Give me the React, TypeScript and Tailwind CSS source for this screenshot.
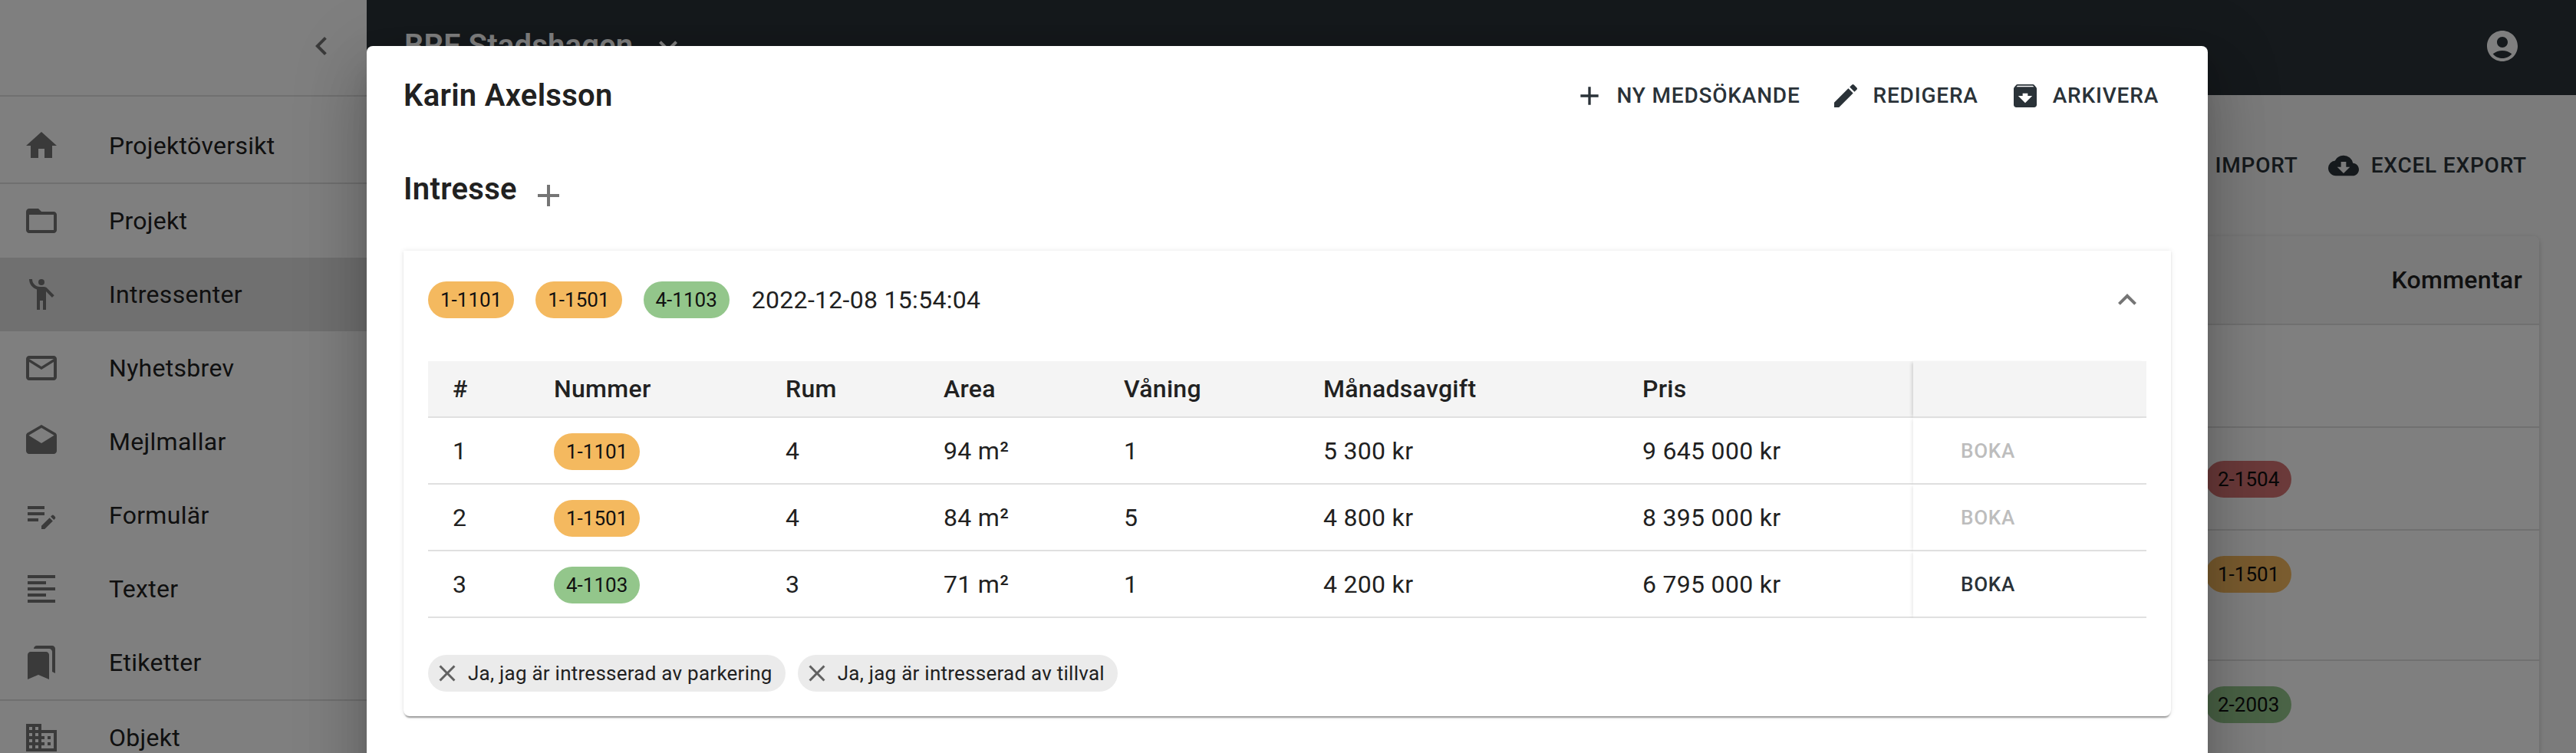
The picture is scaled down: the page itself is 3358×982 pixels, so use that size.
import React from "react";
import {
  MdHome, MdFolderOpen, MdEmojiPeople, MdMailOutline, MdDrafts, MdEditNote, MdFormatAlignLeft,
  MdBookmarks, MdDomain, MdChevronLeft, MdExpandMore, MdExpandLess, MdAccountCircle, MdCloudDownload,
  MdAdd, MdEdit, MdArchive, MdClose,
} from "react-icons/md";

const ORANGE = "bg-[#f4b95f]";
const GREEN = "bg-[#93c68b]";
const RED = "bg-[#d67474]";

function Chip({ label, color }: { label: string; color: string }) {
  return (
    <span className={`inline-flex h-12 items-center rounded-full px-4 align-middle text-[26px] leading-none tracking-normal text-[#111] ${color}`}>
      {label}
    </span>
  );
}

function TextButton({ icon, label }: { icon: React.ReactNode; label: string }) {
  return (
    <button className="flex h-[72px] items-center gap-4 pl-2 pr-4 text-[28px] font-medium tracking-[0.8px] text-[#2a3238]">
      {icon}
      <span>{label}</span>
    </button>
  );
}

const nav: { icon: React.ElementType; label: string; active?: boolean; divider?: boolean }[] = [
  { icon: MdHome, label: "Projektöversikt", divider: true },
  { icon: MdFolderOpen, label: "Projekt" },
  { icon: MdEmojiPeople, label: "Intressenter", active: true },
  { icon: MdMailOutline, label: "Nyhetsbrev" },
  { icon: MdDrafts, label: "Mejlmallar" },
  { icon: MdEditNote, label: "Formulär" },
  { icon: MdFormatAlignLeft, label: "Texter" },
  { icon: MdBookmarks, label: "Etiketter", divider: true },
  { icon: MdDomain, label: "Objekt" },
];

const rows = [
  { n: 1, chip: "1-1101", color: ORANGE, rum: 4, area: "94 m²", van: 1, avg: "5 300 kr", pris: "9 645 000 kr", can: false },
  { n: 2, chip: "1-1501", color: ORANGE, rum: 4, area: "84 m²", van: 5, avg: "4 800 kr", pris: "8 395 000 kr", can: false },
  { n: 3, chip: "4-1103", color: GREEN, rum: 3, area: "71 m²", van: 1, avg: "4 200 kr", pris: "6 795 000 kr", can: true },
];

const widths = [133, 301, 206, 235, 260, 416, 385, 304];
const heads = ["#", "Nummer", "Rum", "Area", "Våning", "Månadsavgift", "Pris"];

function Sidebar() {
  return (
    <aside className="flex h-full w-[478px] shrink-0 flex-col bg-white">
      <div className="flex h-[126px] shrink-0 items-start justify-end border-b-2 border-[#e0e0e0] pr-[35px] pt-9">
        <MdChevronLeft size={48} className="text-[#757575]" />
      </div>
      <nav className="pt-[16px]">
        {nav.map((n) => {
          const I = n.icon;
          return (
            <div
              key={n.label}
              className={`flex items-center gap-[64px] pl-[30px] ${n.divider ? "h-[98px] border-b-2 border-[#e0e0e0] pb-0" : "h-24"} ${n.active ? "bg-[#e0e0e0]" : ""}`}
            >
              <I size={48} className="shrink-0 text-[#757575]" />
              <span className="text-[32px] tracking-[0.3px] text-[#212121]">{n.label}</span>
            </div>
          );
        })}
      </nav>
    </aside>
  );
}

function Background() {
  return (
    <div className="flex min-w-0 flex-1 flex-col bg-[#f6f6f6]">
      <header className="flex h-[124px] shrink-0 items-center justify-between bg-[#2a3238] pb-1 pl-[49px] pr-[72px] text-white">
        <div className="flex items-center gap-[22px]">
          <span className="text-[40px] font-semibold tracking-[0.2px]">BRF Stadshagen</span>
          <MdExpandMore size={48} />
        </div>
        <MdAccountCircle size={48} />
      </header>
      <div className="flex h-[184px] shrink-0 items-start justify-end gap-[15px] pr-[48px] pt-[56px]">
        <TextButton icon={<MdCloudDownload size={40} className="rotate-180" />} label="IMPORT" />
        <TextButton icon={<MdCloudDownload size={40} />} label="EXCEL EXPORT" />
      </div>
      <section className="mx-[48px] flex-1 rounded-t-lg bg-white shadow-[0_2px_6px_rgba(0,0,0,0.2)]">
        <div className="flex h-[116px] items-center justify-end rounded-t-lg border-b-2 border-[#e0e0e0] bg-[#f5f5f5] pr-[22px] text-[32px] font-medium tracking-[0.3px] text-[#212121]">
          Kommentar
        </div>
        <div className="h-[134px] border-b-2 border-[#e0e0e0]" />
        <div className="flex h-[134px] items-start border-b-2 border-[#e0e0e0] pl-[2349px] pt-[43px]">
          <Chip label="2-1504" color={RED} />
        </div>
        <div className="flex h-[170px] items-start border-b-2 border-[#e0e0e0] pl-[2349px] pt-[33px]">
          <Chip label="1-1501" color={ORANGE} />
        </div>
        <div className="flex items-start pl-[2349px] pt-[33px]">
          <Chip label="2-2003" color="bg-[#94c68c]" />
        </div>
      </section>
    </div>
  );
}

function Modal() {
  return (
    <div className="absolute left-[478px] top-[60px] h-[1200px] w-[2400px] rounded-lg bg-white px-[48px] shadow-[0_22px_30px_-14px_rgba(0,0,0,0.2),0_48px_76px_6px_rgba(0,0,0,0.14),0_18px_92px_16px_rgba(0,0,0,0.12)]">
      <div className="flex h-[126px] items-center justify-between pt-[3px]">
        <h2 className="text-[40px] font-semibold leading-none tracking-[0.3px] text-[#212121]">Karin Axelsson</h2>
        <div className="flex items-center gap-[17px]">
          <TextButton icon={<MdAdd size={40} />} label="NY MEDSÖKANDE" />
          <span className="-ml-[2px]">
            <TextButton icon={<MdEdit size={40} />} label="REDIGERA" />
          </span>
          <TextButton icon={<MdArchive size={40} />} label="ARKIVERA" />
        </div>
      </div>
      <div className="flex h-[141px] items-start">
        <h3 className="mt-[37px] text-[40px] font-semibold leading-[48px] tracking-[0.3px] text-[#212121]">Intresse</h3>
        <MdAdd size={48} className="ml-[17px] mt-[45px] text-[#757575]" />
      </div>
      <div className="rounded-b-lg bg-white px-[32px] shadow-[0_4px_2px_-2px_rgba(0,0,0,0.3),0_2px_2px_rgba(0,0,0,0.1),0_0px_6px_rgba(0,0,0,0.1)]">
        <div className="flex h-[144px] items-start pt-[40px]">
          <div className="flex items-center gap-[28px]">
            <Chip label="1-1101" color={ORANGE} />
            <Chip label="1-1501" color={ORANGE} />
            <Chip label="4-1103" color={GREEN} />
          </div>
          <span className="ml-[29px] text-[32px] leading-[48px] tracking-[0.3px] text-[#212121]">2022-12-08 15:54:04</span>
          <MdExpandLess size={48} className="ml-auto mr-[1px] text-[#757575]" />
        </div>
        <table className="w-[2240px] table-fixed border-separate border-spacing-0 text-left text-[32px] tracking-[0.3px] text-[#212121]">
          <colgroup>
            {widths.map((w, i) => (
              <col key={i} style={{ width: w }} />
            ))}
          </colgroup>
          <thead>
            <tr className="h-[74px] bg-[#f4f4f4]">
              {heads.map((h) => (
                <th key={h} className={`border-b-2 border-[#e0e0e0] font-medium ${h === "Nummer" ? "pl-[31px]" : "pl-[32px]"}`}>
                  {h}
                </th>
              ))}
              <th className="border-b-2 border-[#e0e0e0] shadow-[-4px_0_4px_-2px_rgba(0,0,0,0.14)]" />
            </tr>
          </thead>
          <tbody>
            {rows.map((r) => (
              <tr key={r.n} className="h-[87px]">
                <td className="border-b-2 border-[#e0e0e0] pl-[32px]">{r.n}</td>
                <td className="border-b-2 border-[#e0e0e0] pl-[31px]">
                  <Chip label={r.chip} color={r.color} />
                </td>
                <td className="border-b-2 border-[#e0e0e0] pl-[32px]">{r.rum}</td>
                <td className="border-b-2 border-[#e0e0e0] pl-[32px]">{r.area}</td>
                <td className="border-b-2 border-[#e0e0e0] pl-[32px]">{r.van}</td>
                <td className="border-b-2 border-[#e0e0e0] pl-[32px]">{r.avg}</td>
                <td className="border-b-2 border-[#e0e0e0] pl-[32px]">{r.pris}</td>
                <td className="border-b-2 border-[#e0e0e0] pl-[62px] shadow-[-4px_0_4px_-2px_rgba(0,0,0,0.08)]">
                  <span className={`block text-[26px] font-medium leading-[30px] tracking-[0.75px] ${r.can ? "text-[#2a3238]" : "text-[#bdbdbd]"}`}>BOKA</span>
                </td>
              </tr>
            ))}
          </tbody>
        </table>
        <div className="flex gap-4 pb-[32px] pt-[48px]">
          {["Ja, jag är intresserad av parkering", "Ja, jag är intresserad av tillval"].map((t) => (
            <span key={t} className="inline-flex h-12 items-center gap-[9px] rounded-full bg-[#ebebeb] pl-[7px] pr-[17px] text-[26px] tracking-[0.25px] text-[#212121]">
              <MdClose size={36} className="text-[#616161]" />
              {t}
            </span>
          ))}
        </div>
      </div>
    </div>
  );
}

export default function App() {
  return (
    <div className="relative h-[982px] w-full overflow-hidden [font-family:Roboto,sans-serif]">
      <div className="flex h-full">
        <Sidebar />
        <Background />
      </div>
      <div className="absolute inset-0 bg-black/50" />
      <Modal />
    </div>
  );
}
